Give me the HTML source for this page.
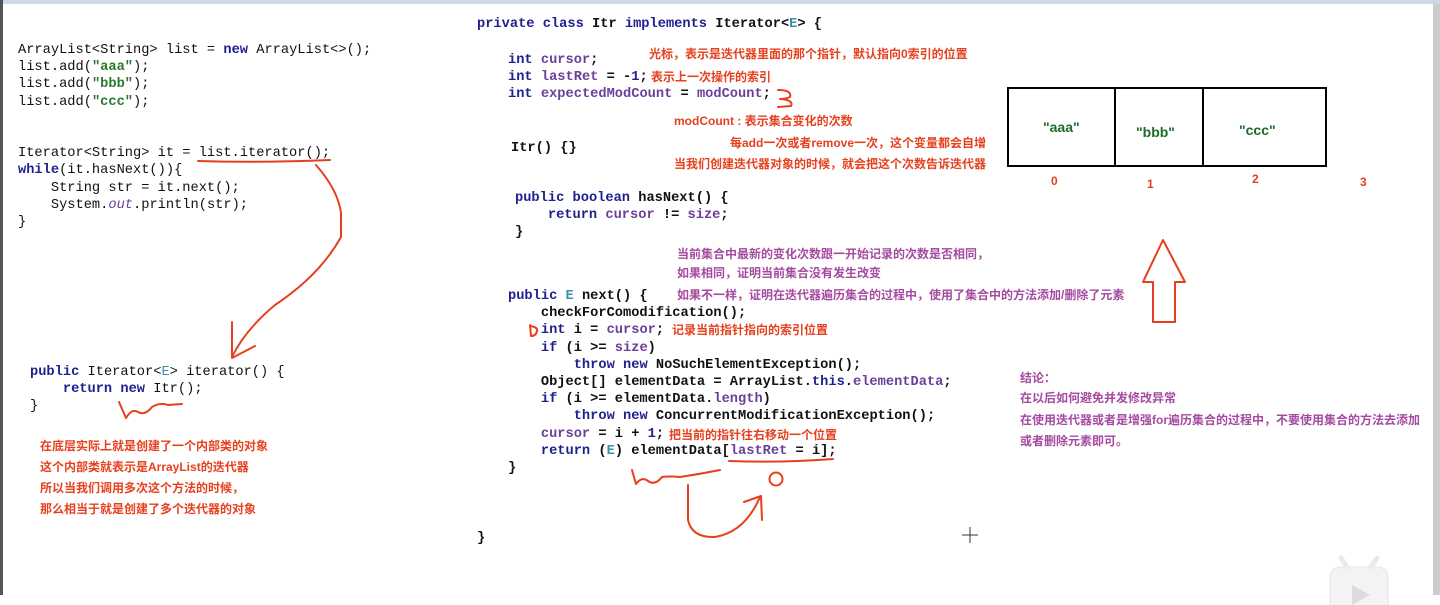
<!DOCTYPE html>
<html><head><meta charset="utf-8"><style>
body{margin:0;width:1440px;height:595px;background:#fff;position:relative;overflow:hidden}
.c{position:absolute;font-family:"Liberation Mono",monospace;font-size:13.7px;line-height:17.2px;white-space:pre;color:#111}
.b{font-weight:bold}
.k{color:#1f1f8f;font-weight:bold}
.s{color:#2a7a2a;font-weight:bold}
.f{color:#6b3f9a}
.t{color:#3a90a8}
.r,.p{position:absolute;font-family:"Liberation Sans","Noto Sans CJK SC",sans-serif;font-size:12px;font-weight:bold;white-space:nowrap;line-height:14px}
.r{color:#e6401e}
.p{color:#a54aa0}
</style></head><body>
<div style="position:absolute;left:0;top:0;width:1440px;height:4px;background:#cfd8e8"></div>
<div style="position:absolute;left:0;top:0;width:3px;height:595px;background:#555"></div>
<div style="position:absolute;left:1433px;top:4px;width:7px;height:591px;background:#ccc"></div>

<div class="c" style="left:18px;top:42px">ArrayList&lt;String&gt; list = <span class="k">new</span> ArrayList&lt;&gt;();
list.add(<span class="s">"aaa"</span>);
list.add(<span class="s">"bbb"</span>);
list.add(<span class="s">"ccc"</span>);


Iterator&lt;String&gt; it = list.iterator();
<span class="k">while</span>(it.hasNext()){
    String str = it.next();
    System.<i class="f">out</i>.println(str);
}</div>

<div class="c" style="left:30px;top:364px"><span class="k">public</span> Iterator&lt;<span class="t">E</span>&gt; iterator() {
    <span class="k">return</span> <span class="k">new</span> Itr();
}</div>

<div class="c b" style="left:477px;top:16px"><span class="k">private</span> <span class="k">class</span> Itr <span class="k">implements</span> Iterator&lt;<span class="t">E</span>&gt; {</div>
<div class="c b" style="left:508px;top:52px"><span class="k">int</span> <span class="f">cursor</span>;
<span class="k">int</span> <span class="f">lastRet</span> = -<span style="color:#1f1f8f">1</span>;
<span class="k">int</span> <span class="f">expectedModCount</span> = <span class="f">modCount</span>;</div>
<div class="c b" style="left:511px;top:140px">Itr() {}</div>
<div class="c b" style="left:515px;top:190px"><span class="k">public</span> <span class="k">boolean</span> hasNext() {
    <span class="k">return</span> <span class="f">cursor</span> != <span class="f">size</span>;
}</div>
<div class="c b" style="left:508px;top:288px"><span class="k">public</span> <span class="t">E</span> next() {
    checkForComodification();
    <span class="k">int</span> i = <span class="f">cursor</span>;
    <span class="k">if</span> (i &gt;= <span class="f">size</span>)
        <span class="k">throw</span> <span class="k">new</span> NoSuchElementException();
    Object[] elementData = ArrayList.<span class="k">this</span>.<span class="f">elementData</span>;
    <span class="k">if</span> (i &gt;= elementData.<span class="f">length</span>)
        <span class="k">throw</span> <span class="k">new</span> ConcurrentModificationException();
    <span class="f">cursor</span> = i + <span style="color:#1f1f8f">1</span>;
    <span class="k">return</span> (<span class="t">E</span>) elementData[<span class="f">lastRet</span> = i];
}</div>
<div class="c b" style="left:477px;top:530px">}</div>

<div class="r" style="left:649px;top:47px">光标，表示是迭代器里面的那个指针，默认指向0索引的位置</div>
<div class="r" style="left:651px;top:70px">表示上一次操作的索引</div>
<div class="r" style="left:674px;top:114px">modCount : 表示集合变化的次数</div>
<div class="r" style="left:730px;top:136px">每add一次或者remove一次，这个变量都会自增</div>
<div class="r" style="left:674px;top:157px">当我们创建迭代器对象的时候，就会把这个次数告诉迭代器</div>
<div class="p" style="left:677px;top:247px">当前集合中最新的变化次数跟一开始记录的次数是否相同，</div>
<div class="p" style="left:677px;top:266px">如果相同，证明当前集合没有发生改变</div>
<div class="p" style="left:677px;top:288px">如果不一样，证明在迭代器遍历集合的过程中，使用了集合中的方法添加/删除了元素</div>
<div class="r" style="left:672px;top:323px">记录当前指针指向的索引位置</div>
<div class="r" style="left:669px;top:428px">把当前的指针往右移动一个位置</div>
<div class="r" style="left:40px;top:439px">在底层实际上就是创建了一个内部类的对象</div>
<div class="r" style="left:40px;top:460px">这个内部类就表示是ArrayList的迭代器</div>
<div class="r" style="left:40px;top:481px">所以当我们调用多次这个方法的时候，</div>
<div class="r" style="left:40px;top:502px">那么相当于就是创建了多个迭代器的对象</div>
<div class="p" style="left:1020px;top:371px">结论：</div>
<div class="p" style="left:1020px;top:391px">在以后如何避免并发修改异常</div>
<div class="p" style="left:1020px;top:413px">在使用迭代器或者是增强for遍历集合的过程中，不要使用集合的方法去添加</div>
<div class="p" style="left:1020px;top:434px">或者删除元素即可。</div>

<div style="position:absolute;left:1007px;top:87px;width:316px;height:76px;border:2px solid #000"></div>
<div style="position:absolute;left:1114px;top:87px;width:2px;height:80px;background:#000"></div>
<div style="position:absolute;left:1202px;top:87px;width:2px;height:80px;background:#000"></div>
<div class="r" style="left:1043px;top:120px;color:#1d6a2a;font-size:14px">"aaa"</div>
<div class="r" style="left:1136px;top:125px;color:#1d6a2a;font-size:14px">"bbb"</div>
<div class="r" style="left:1239px;top:123px;color:#1d6a2a;font-size:14px">"ccc"</div>
<div class="r" style="left:1051px;top:174px">0</div>
<div class="r" style="left:1147px;top:177px">1</div>
<div class="r" style="left:1252px;top:172px">2</div>
<div class="r" style="left:1360px;top:175px">3</div>

<svg width="1440" height="595" style="position:absolute;left:0;top:0" fill="none" stroke="#e6401e" stroke-width="2" stroke-linecap="round" stroke-linejoin="round">
<path d="M198 161 Q260 163 330 160"/>
<path d="M316 165 Q338 190 341 213 L341 237 Q320 275 275 305 Q245 330 232 357"/>
<path d="M232 322 L232 358 L255 346"/>
<path d="M119 402 L126 418 Q132 408 138 412 Q145 416 152 407 Q160 402 168 405 L182 404"/>
<path d="M632 470 L636 484 Q642 476 648 481 Q655 486 662 477 Q670 476 680 477 Q700 474 720 470"/>
<path d="M729 461 Q780 463 833 459"/>
<circle cx="776" cy="479" r="6.5"/>
<path d="M688 485 L688 520 Q692 538 715 537 Q745 532 760 497"/>
<path d="M744 502 L761 496 L762 520"/>
<path d="M778 90 Q792 90 790 97 Q786 99 780 99 Q794 100 791 106 L778 107"/>
<path d="M530 325 L531 336 M530 326 Q538 327 537 331 Q536 336 531 336"/>
<path d="M1163 240 L1143 282 L1153 282 L1153 322 L1175 322 L1175 282 L1185 282 Z"/>
</svg>
<svg width="20" height="20" style="position:absolute;left:960px;top:525px" stroke="#333" stroke-width="1"><path d="M10 2V18M2 10H18"/></svg>
<svg width="70" height="50" style="position:absolute;left:1325px;top:555px"><rect x="5" y="12" width="58" height="50" rx="10" fill="#f3f3f3" stroke="#e4e4e4"/><path d="M22 12 L16 3 M46 12 L52 3" stroke="#eaeaea" stroke-width="5" stroke-linecap="round"/><path d="M27 30 L45 40 L27 50Z" fill="#dcdcdc"/></svg>
</body></html>
